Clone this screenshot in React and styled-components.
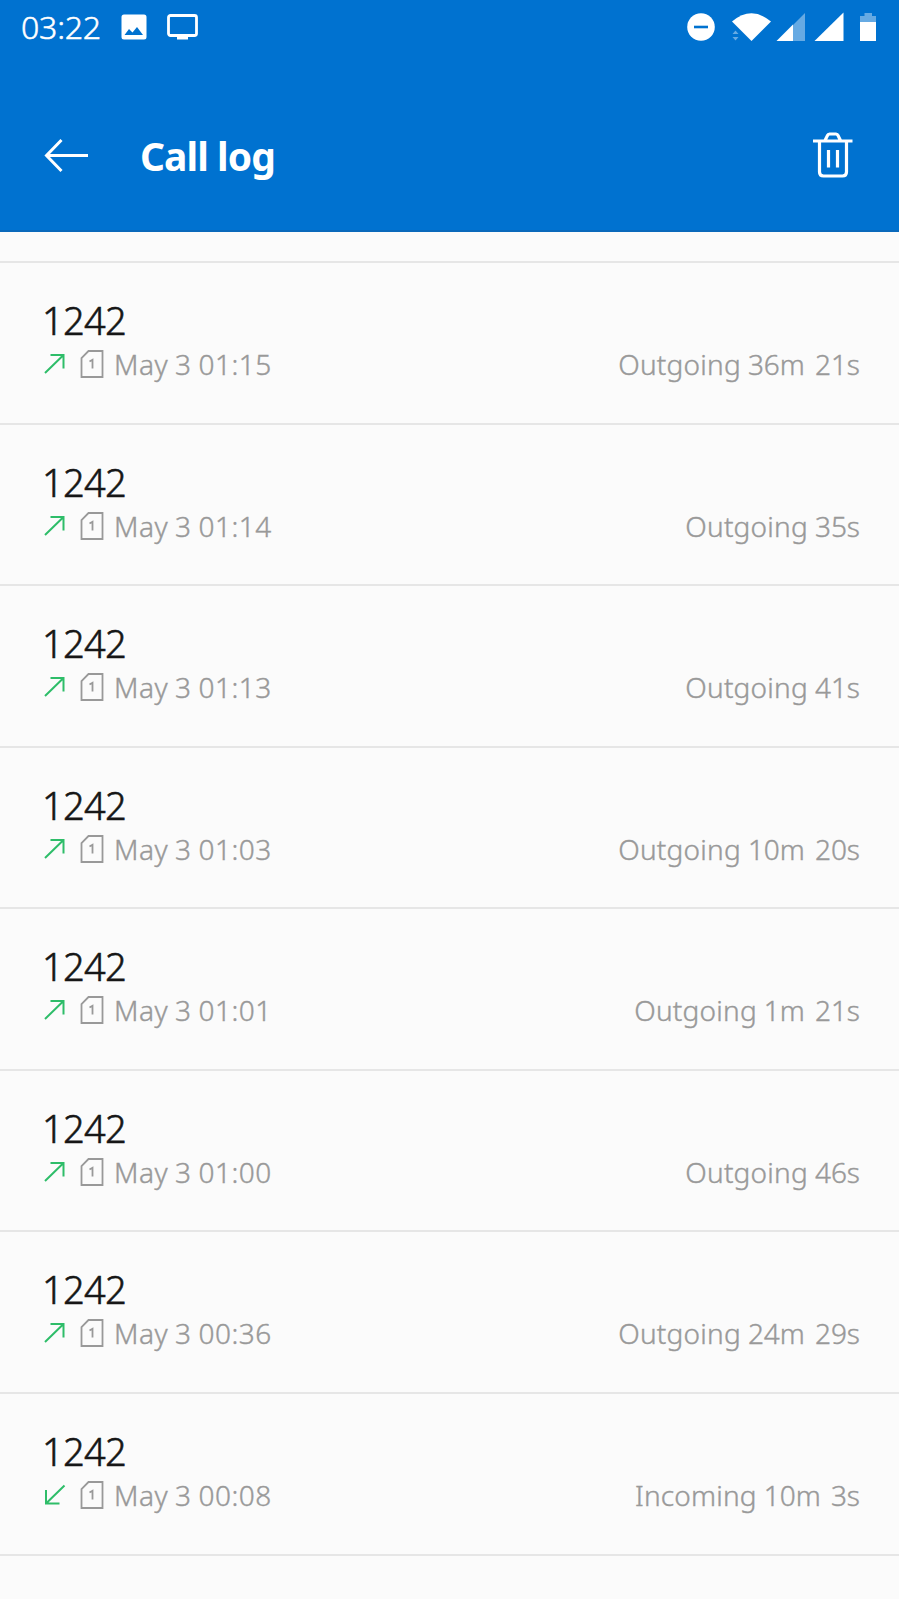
import React from 'react'
import styled, { createGlobalStyle } from "styled-components";

const GlobalStyle = createGlobalStyle`
  body {
    margin: 0;
    background: #fbfbfb;
    font-family: "Noto Sans", "Open Sans", sans-serif;
  }
`;

const Screen = styled.div`
  width: 899px;
  height: 1599px;
  overflow: hidden;
  background: #fbfbfb;
`;

const Top = styled.header`
  height: 232px;
  box-sizing: border-box;
  background: #0072d0;
  border-bottom: 2px solid #0a69bb;
  color: #fff;
`;

const StatusBar = styled.div`
  display: flex;
  justify-content: space-between;
  height: 53px;
  padding: 0 22px 0 21px;
`;

const StatusGroup = styled.div`
  display: flex;
  align-items: center;
`;

const Clock = styled.span`
  width: 100px;
  font-size: 32px;
  line-height: 54px;
  font-weight: 300;
  letter-spacing: -0.2px;
  white-space: nowrap;
  -webkit-text-stroke: 0.5px currentColor;
`;

const Icon = styled.svg`
  display: block;
  flex: none;
  margin-left: ${(p) => p.$left || 0}px;
`;

const AppBar = styled.div`
  display: flex;
  align-items: center;
  height: 101px;
  padding: 52px 46px 0 43px;
`;

const Title = styled.h1`
  flex: 1;
  margin: 1px 0 0 51px;
  font-size: 39px;
  line-height: 52px;
  font-weight: 700;
  letter-spacing: -0.95px;
`;

const IconButton = styled.button`
  padding: 0;
  border: 0;
  background: none;
  color: inherit;
`;

const List = styled.ul`
  margin: 0;
  padding: 29px 0 0;
  list-style: none;
`;

const Row = styled.li`
  height: 161.57px;
  box-sizing: border-box;
  padding: 31px 39px 0 42px;
  border-top: 2px solid #e6e6e6;
`;

const Number = styled.div`
  height: 52px;
  font-size: 38px;
  line-height: 53px;
  font-weight: 300;
  letter-spacing: -0.7px;
  color: #161616;
  -webkit-text-stroke: 0.6px currentColor;
`;

const Details = styled.div`
  display: flex;
  align-items: center;
  height: 36px;
  font-size: 28px;
  line-height: 36px;
  font-weight: 300;
  color: #999;
  -webkit-text-stroke: 0.4px currentColor;
`;

const When = styled.span`
  flex: 1;
  margin-left: 10px;
  letter-spacing: 0.5px;
  word-spacing: -0.8px;
`;

const Kind = styled.span`
  letter-spacing: 0.2px;
`;

const Part = styled.span`
  margin-left: ${(p) => (p.$first ? 7 : 10)}px;
`;

const calls = [
  { time: "01:15", duration: "36m 21s" },
  { time: "01:14", duration: "35s" },
  { time: "01:13", duration: "41s" },
  { time: "01:03", duration: "10m 20s" },
  { time: "01:01", duration: "1m 21s" },
  { time: "01:00", duration: "46s" },
  { time: "00:36", duration: "24m 29s" },
  { time: "00:08", duration: "10m 3s", incoming: true },
];

function DirectionIcon({ incoming }) {
  return (
    <Icon $left={2} width="22" height="22" viewBox="0 0 22 22" fill="none" stroke="#2ebd69" strokeWidth="2">
      {incoming
        ? <path d="M20.5 1.5L2 19.5M2 6V19.5H15.5" />
        : <path d="M1 20L19.5 2M6.5 2H19.5V15.5" />}
    </Icon>
  )
}

function SimIcon() {
  return (
    <Icon $left={14} width="24" height="28" viewBox="0 0 24 28" fill="none" stroke="#999" strokeWidth="1.8">
      <path d="M8.5 1H22.5V27H1.5V8Z" />
      <path d="M9.5 11.5L12.5 9.8V18.5" />
    </Icon>
  )
}

function CallRow({ call }) {
  return (
    <Row>
      <Number>1242</Number>
      <Details>
        <DirectionIcon incoming={call.incoming} />
        <SimIcon />
        <When>May 3 {call.time}</When>
        <Kind>{call.incoming ? "Incoming" : "Outgoing"}</Kind>
        {call.duration.split(" ").map((part, i) => (
          <Part key={part} $first={i === 0}>{part}</Part>
        ))}
      </Details>
    </Row>
  )
}

export default function App() {
  return (
    <Screen>
      <GlobalStyle />
      <Top>
        <StatusBar>
          <StatusGroup>
            <Clock>03:22</Clock>
            <Icon width="26" height="26" viewBox="0 0 26 26">
              <path fill="#fff" fillRule="evenodd" d="M3 0.5H23Q25.5 0.5 25.5 3V23Q25.5 25.5 23 25.5H3Q0.5 25.5 0.5 23V3Q0.5 0.5 3 0.5ZM3.5 21H22L16 13L11.5 18.5L8 15Z" />
            </Icon>
            <Icon $left={20} width="31" height="26" viewBox="0 0 31 26">
              <rect x="1.5" y="1.5" width="28" height="20" rx="2" fill="none" stroke="#fff" strokeWidth="2.8" />
              <path fill="#fff" d="M10 21H21V25.5H10Z" />
            </Icon>
          </StatusGroup>
          <StatusGroup>
            <Icon width="28" height="28" viewBox="0 0 28 28">
              <circle cx="14" cy="14" r="13.8" fill="#fff" />
              <path d="M7 14H21" stroke="#0072d0" strokeWidth="2.6" />
            </Icon>
            <Icon $left={16} width="40" height="30" viewBox="0 0 40 30">
              <path fill="#fff" d="M1 9.5Q20.5 -7 40 9.5L20.5 29Z" />
              <path fill="#fff" opacity="0.4" d="M1.5 22L4.5 18.5L7.5 22ZM1.5 25H7.5L4.5 28.5Z" />
            </Icon>
            <Icon $left={5} width="30" height="30" viewBox="0 0 30 30">
              <path fill="#fff" opacity="0.4" d="M29 1V29H17V13Z" />
              <path fill="#fff" d="M17 12.5V29H0.5Z" />
            </Icon>
            <Icon $left={8} width="30" height="30" viewBox="0 0 30 30">
              <path fill="#fff" d="M29.5 0.5V29H0.5Z" />
            </Icon>
            <Icon $left={16} width="17" height="30" viewBox="0 0 17 30">
              <path fill="#fff" opacity="0.4" d="M4.5 1H12V4H16V10H0V4H4.5Z" />
              <path fill="#fff" d="M0 10H16V29H0Z" />
            </Icon>
          </StatusGroup>
        </StatusBar>
        <AppBar>
          <IconButton aria-label="Back">
            <Icon width="46" height="36" viewBox="0 0 46 36" fill="none" stroke="#fff" strokeWidth="3">
              <path d="M45 17.5H3.5M18.5 2L3.5 17.5L18.5 33" />
            </Icon>
          </IconButton>
          <Title>Call log</Title>
          <IconButton aria-label="Delete">
            <Icon width="40" height="48" viewBox="0 0 40 48" fill="none" stroke="#fff" strokeWidth="3.2">
              <path d="M0 9H39.5M6.5 9V40Q6.500 44 10.5 44H29.5Q33.5 44 33.5 40V9M12 8.5L14.500 3.500Q15 2 16.5 2H23Q24.5 2 25 3.5L27.5 8.5M15.5 18V35.5M24.5 18V35.5" />
            </Icon>
          </IconButton>
        </AppBar>
      </Top>
      <List>
        {calls.map((call) => (
          <CallRow key={call.time} call={call} />
        ))}
        <Row aria-hidden="true" />
      </List>
    </Screen>
  )
}
